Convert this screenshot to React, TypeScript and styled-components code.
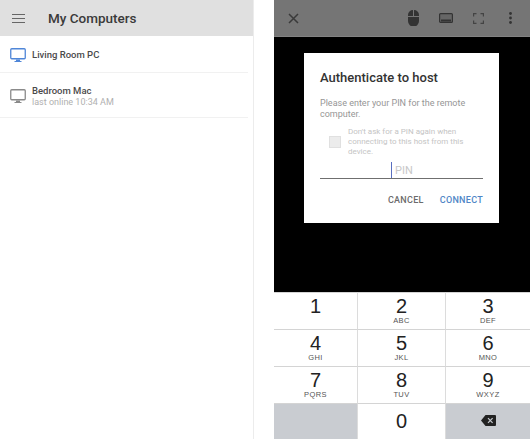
import styled, { createGlobalStyle } from 'styled-components';

const GlobalStyle = createGlobalStyle`
    html, body {
        margin: 0;
        padding: 0;
        background: #ffffff;
    }
    body {
        font-family: Roboto, "Liberation Sans", sans-serif;
    }
`;

const computers = [
    { name: 'Living Room PC', online: true },
    { name: 'Bedroom Mac', status: 'last online 10:34 AM', online: false },
];

const keys = [
    { digit: '1', letters: '' },
    { digit: '2', letters: 'ABC' },
    { digit: '3', letters: 'DEF' },
    { digit: '4', letters: 'GHI' },
    { digit: '5', letters: 'JKL' },
    { digit: '6', letters: 'MNO' },
    { digit: '7', letters: 'PQRS' },
    { digit: '8', letters: 'TUV' },
    { digit: '9', letters: 'WXYZ' },
];

const MonitorIcon = ({ color }: { color: string }) => (
    <svg width="16" height="15" viewBox="0 0 16 15">
        <rect x="0.75" y="0.75" width="14.5" height="10" rx="1" fill="none" stroke={color} strokeWidth="1.3" />
        <path d="M6 11.5h4v1.5h1.5v1h-7v-1H6z" fill={color} />
    </svg>
);

const App = () => {
    return (
        <>
            <GlobalStyle />
            <Page>
                <ListPane>
                    <ListHeader>
                        <svg width="13" height="9" viewBox="0 0 13 9">
                            <path d="M0 .5h13M0 4.5h13M0 8.5h13" stroke="#666" strokeWidth="1.2" />
                        </svg>
                        <ListTitle>My Computers</ListTitle>
                    </ListHeader>
                    {computers.map(computer => (
                        <ComputerRow key={computer.name} $tall={!!computer.status}>
                            <MonitorIcon color={computer.online ? '#4f86d8' : '#8a8a8a'} />
                            <div>
                                <ComputerName>{computer.name}</ComputerName>
                                {computer.status && <ComputerStatus>{computer.status}</ComputerStatus>}
                            </div>
                        </ComputerRow>
                    ))}
                </ListPane>

                <SessionPane>
                    <Toolbar>
                        <svg width="11" height="11" viewBox="0 0 11 11">
                            <path d="M1 1l9 9M10 1l-9 9" stroke="#3a3a3a" strokeWidth="1.5" />
                        </svg>
                        <ToolbarIcons>
                            <svg width="11" height="16" viewBox="0 0 11 16">
                                <path d="M5 0v6H0V5a5 5 0 0 1 5-5zM6 0a5 5 0 0 1 5 5v1H6zM0 7h11v4a5 5 0 0 1-11 0z" fill="#333" />
                            </svg>
                            <svg width="14" height="10" viewBox="0 0 14 10">
                                <rect x="0.6" y="0.6" width="12.8" height="8.8" rx="1" fill="#666" stroke="#333" strokeWidth="1.2" />
                                <path d="M2 7.5h10" stroke="#333" strokeWidth="2" />
                            </svg>
                            <svg width="11" height="11" viewBox="0 0 11 11">
                                <path d="M.6 3.5V.6h2.9M7.5.6h2.9v2.9M10.4 7.5v2.9H7.5M3.5 10.4H.6V7.5" fill="none" stroke="#444" strokeWidth="1.2" />
                            </svg>
                            <DotsIcon width="3" height="12" viewBox="0 0 3 12">
                                <circle cx="1.5" cy="1.5" r="1.4" fill="#333" />
                                <circle cx="1.5" cy="6" r="1.4" fill="#333" />
                                <circle cx="1.5" cy="10.5" r="1.4" fill="#333" />
                            </DotsIcon>
                        </ToolbarIcons>
                    </Toolbar>

                    <Stage>
                        <Dialog>
                            <DialogTitle>Authenticate to host</DialogTitle>
                            <DialogText>Please enter your PIN for the remote computer.</DialogText>
                            <RememberRow>
                                <FakeCheckbox />
                                <RememberText>Don't ask for a PIN again when connecting to this host from this device.</RememberText>
                            </RememberRow>
                            <PinField>
                                <Caret />
                                <PinPlaceholder>PIN</PinPlaceholder>
                            </PinField>
                            <DialogActions>
                                <ActionButton>CANCEL</ActionButton>
                                <ActionButton $primary>CONNECT</ActionButton>
                            </DialogActions>
                        </Dialog>
                    </Stage>

                    <Keypad>
                        {keys.map(key => (
                            <Key key={key.digit}>
                                <Digit>{key.digit}</Digit>
                                <Letters>{key.letters}</Letters>
                            </Key>
                        ))}
                        <Key $dark />
                        <Key>
                            <Digit>0</Digit>
                        </Key>
                        <Key $dark>
                            <svg width="15" height="11" viewBox="0 0 15 11">
                                <path d="M4.5 0H14a1 1 0 0 1 1 1v9a1 1 0 0 1-1 1H4.5L0 5.5z" fill="#222" />
                                <path d="M7 3.2l4.6 4.6M11.6 3.2L7 7.8" stroke="#c8cbd0" strokeWidth="1.2" />
                            </svg>
                        </Key>
                    </Keypad>
                </SessionPane>
            </Page>
        </>
    );
};

export default App;

const Page = styled.div`
    width: 530px;
    height: 439px;
    display: flex;
    justify-content: space-between;
    overflow: hidden;
`;

const ListPane = styled.div`
    width: 254px;
    box-sizing: border-box;
    border-right: 1px solid #ececec;
`;

const ListHeader = styled.div`
    height: 36px;
    box-sizing: border-box;
    padding-left: 12px;
    display: flex;
    align-items: center;
    gap: 23px;
    background: #e0e0e0;
`;

const ListTitle = styled.div`
    font-size: 13.5px;
    font-weight: 500;
    color: #3a3a3a;
`;

const ComputerRow = styled.div<{ $tall: boolean }>`
    height: ${props => (props.$tall ? '45px' : '37px')};
    box-sizing: border-box;
    margin-right: 5px;
    padding: 2px 0 0 10px;
    display: flex;
    align-items: center;
    gap: 6px;
    border-bottom: 1px solid #f1f1f1;
`;

const ComputerName = styled.div`
    font-size: 9.5px;
    font-weight: 500;
    line-height: 12px;
    color: #4a4a4a;
`;

const ComputerStatus = styled.div`
    font-size: 9px;
    line-height: 11px;
    color: #b0b0b0;
`;

const SessionPane = styled.div`
    width: 256px;
    display: flex;
    flex-direction: column;
`;

const Toolbar = styled.div`
    height: 37px;
    flex-shrink: 0;
    box-sizing: border-box;
    padding: 0 18px 0 14px;
    display: flex;
    align-items: center;
    justify-content: space-between;
    background: #757575;
    border-bottom: 1px solid #838383;
`;

const ToolbarIcons = styled.div`
    display: flex;
    align-items: center;
    gap: 20px;
`;

const DotsIcon = styled.svg`
    margin-left: 5px;
`;

const Stage = styled.div`
    height: 255px;
    flex-shrink: 0;
    box-sizing: border-box;
    padding: 16px 31px 0 30px;
    background: #000000;
`;

const Dialog = styled.div`
    height: 170px;
    box-sizing: border-box;
    padding: 17px 16px 0;
    background: #ffffff;
`;

const DialogTitle = styled.div`
    font-size: 13px;
    font-weight: 500;
    line-height: 16px;
    color: #333333;
`;

const DialogText = styled.div`
    margin-top: 12px;
    font-size: 9px;
    line-height: 11px;
    color: #969696;
`;

const RememberRow = styled.div`
    margin: 7px 0 0 9px;
    display: flex;
    align-items: center;
    gap: 7px;
`;

const FakeCheckbox = styled.div`
    width: 12px;
    height: 12px;
    flex-shrink: 0;
    box-sizing: border-box;
    background: #ececec;
    border: 1px solid #e0e0e0;
`;

const RememberText = styled.div`
    font-size: 8px;
    line-height: 10px;
    color: #c4c4c4;
`;

const PinField = styled.div`
    position: relative;
    height: 16px;
    margin-top: 5px;
    display: flex;
    justify-content: center;
    align-items: center;
    border-bottom: 1px solid #6f6f6f;
`;

const Caret = styled.div`
    position: absolute;
    left: 71px;
    top: 0;
    width: 1px;
    height: 16px;
    background: #5a6fc0;
`;

const PinPlaceholder = styled.div`
    margin-left: 5px;
    font-size: 11px;
    color: #c8c8c8;
`;

const DialogActions = styled.div`
    margin-top: 16px;
    display: flex;
    justify-content: flex-end;
    gap: 16px;
`;

const ActionButton = styled.div<{ $primary?: boolean }>`
    font-size: 9px;
    font-weight: 500;
    letter-spacing: 0.3px;
    color: ${props => (props.$primary ? '#4f86c6' : '#6b6b6b')};
`;

const Keypad = styled.div`
    flex: 1;
    display: grid;
    grid-template-columns: 84px 88px 84px;
    grid-template-rows: 37px 37px 37px 36px;
    background: #ffffff;
`;

const Key = styled.div<{ $dark?: boolean }>`
    box-sizing: border-box;
    padding-bottom: 2px;
    display: flex;
    flex-direction: column;
    align-items: center;
    justify-content: center;
    background: ${props => (props.$dark ? '#c9ccd1' : '#ffffff')};
    border-top: 1px solid #d4d4d4;
    border-right: 1px solid #dcdcdc;
    &:nth-child(3n) {
        border-right: none;
    }
`;

const Digit = styled.div`
    font-family: "Liberation Sans", Arial, sans-serif;
    font-size: 20px;
    line-height: 20px;
    color: #222222;
`;

const Letters = styled.div`
    height: 9px;
    font-family: "Liberation Sans", Arial, sans-serif;
    font-size: 7.5px;
    line-height: 9px;
    letter-spacing: 0.4px;
    color: #555555;
`;
